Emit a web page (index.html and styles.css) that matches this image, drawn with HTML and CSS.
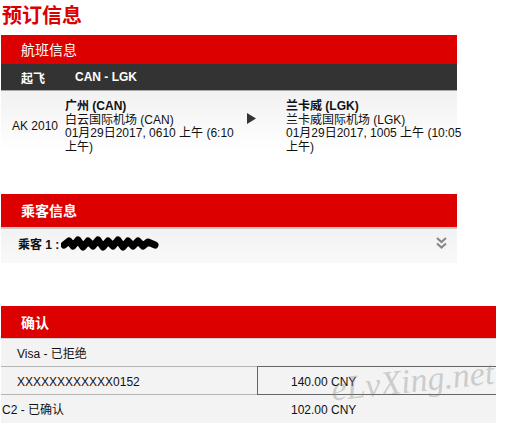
FILE: index.html
```html
<!DOCTYPE html>
<html lang="zh-CN">
<head>
    <meta charset="UTF-8">
    <title>预订信息</title>
    <link rel="stylesheet" href="styles.css">
</head>
<body>

<h1 class="page-title">预订信息</h1>

<section class="panel panel-narrow">
    <div class="panel-head thin">航班信息</div>
    <div class="leg-bar">
        <span class="leg-label">起飞</span>
        <span>CAN - LGK</span>
    </div>
    <div class="leg">
        <div class="leg-no">AK 2010</div>
        <div class="leg-point">
            <b>广州 (CAN)</b><br>
            白云国际机场 (CAN)<br>
            01月29日2017, 0610 上午 (6:10 上午)
        </div>
        <div class="leg-arrow">
            <svg width="9" height="11" viewBox="0 0 9 11"><path d="M0 0 L9 5.5 L0 11 Z" fill="#333"/></svg>
        </div>
        <div class="leg-point">
            <b>兰卡威 (LGK)</b><br>
            兰卡威国际机场 (LGK)<br>
            01月29日2017, 1005 上午 (10:05 上午)
        </div>
    </div>
</section>

<section class="panel panel-narrow">
    <div class="panel-head">乘客信息</div>
    <div class="passenger">
        <span class="passenger-label">乘客 1 :</span>
        <svg class="scribble" width="98" height="16" viewBox="0 0 98 16">
            <path d="M3 9 L8 5 L12 10 L17 4 L22 11 L27 5 L32 10 L37 4 L42 11 L47 5 L52 10 L57 4 L62 11 L67 5 L72 10 L77 5 L82 10 L87 6 L94 9" stroke="#000" stroke-width="7" fill="none" stroke-linejoin="round" stroke-linecap="round"/>
        </svg>
        <svg class="expand" width="11" height="12" viewBox="0 0 11 12">
            <path d="M1 1 L5.5 5 L10 1 M1 6.5 L5.5 10.5 L10 6.5" stroke="#888" stroke-width="2.2" fill="none"/>
        </svg>
    </div>
</section>

<section class="panel panel-wide">
    <div class="panel-head flat">确认</div>
    <div class="pay">
        <div class="pay-cell pay-full">Visa - 已拒绝</div>
        <div class="pay-cell">XXXXXXXXXXXX0152</div>
        <div class="pay-cell pay-box">140.00 CNY</div>
        <div class="pay-cell pay-flush">C2 - 已确认</div>
        <div class="pay-cell pay-amount">102.00 CNY</div>
    </div>
    <div class="watermark">eLvXing.net</div>
</section>

</body>
</html>
```

FILE: styles.css
```css
body {
    margin: 0;
    font-family: "Liberation Sans", Arial, "Noto Sans CJK SC", sans-serif;
    font-size: 12px;
    color: #111;
    background-color: #fff;
}

.page-title {
    margin: 0;
    padding: 4px 0 7px 2px;
    font-size: 20px;
    line-height: 24px;
    color: #d80000;
}

.panel {
    position: relative;
    margin-left: 1px;
}

.panel-narrow {
    width: 456px;
    margin-bottom: 43px;
}

.panel-narrow:first-of-type {
    margin-bottom: 44px;
}

.panel-wide {
    width: 495px;
}

.panel-head {
    height: 35px;
    padding: 2px 0 0 20px;
    box-sizing: border-box;
    line-height: 31px;
    font-size: 14px;
    font-weight: bold;
    color: #fff;
    background-color: #dc0000;
    border-bottom: 2px solid #c8c8c8;
}

.panel-head.thin {
    height: 29px;
    line-height: 27px;
    font-weight: normal;
    border-bottom: none;
}

.panel-head.flat {
    height: 32px;
    line-height: 30px;
    border-bottom: none;
}

.leg-bar {
    display: flex;
    height: 27px;
    box-sizing: border-box;
    align-items: center;
    padding-left: 20px;
    font-weight: bold;
    color: #fff;
    background-color: #333;
    border-bottom: 1px solid #aaa;
}

.leg-label {
    width: 54px;
}

.leg {
    display: grid;
    grid-template-columns: 53px 171px 50px 172px;
    align-items: center;
    box-sizing: border-box;
    padding: 9px 0 0 11px;
    height: 59px;
    line-height: 13.5px;
    background: linear-gradient(#f1f1f1, #fff);
}

.leg-point:last-child {
    width: 182px;
}

.leg-arrow {
    padding: 0 0 0 11px;
    margin-top: -18px;
    line-height: 0;
}

.passenger {
    display: flex;
    align-items: center;
    height: 34px;
    padding: 0 10px 5px 17px;
    box-sizing: border-box;
    background: linear-gradient(#f2f2f2, #f9f9f9);
}

.passenger-label {
    font-weight: bold;
}

.scribble {
    margin-left: 2px;
}

.expand {
    margin-left: auto;
    margin-top: -2px;
}

.pay {
    display: grid;
    grid-template-columns: 256px 1fr;
    border-top: 1px solid #d0d0d0;
}

.pay-cell {
    height: 28px;
    box-sizing: border-box;
    padding: 8px 0 0 16px;
    line-height: 14px;
    background-color: #f3f3f3;
    border-bottom: 1px solid #b4b4b4;
}

.pay-full {
    grid-column: span 2;
}

.pay-box {
    height: 29px;
    margin: -1px 0 0;
    padding-left: 33px;
    padding-top: 8px;
    border: 1px solid #666;
    border-right: none;
}

.pay-flush {
    padding-left: 1px;
    border-bottom: none;
}

.pay-amount {
    padding-left: 34px;
    border-bottom: none;
}

.watermark {
    position: absolute;
    left: 330px;
    top: 56px;
    font-family: "Liberation Serif", serif;
    font-style: italic;
    font-size: 34px;
    color: rgba(140, 140, 140, 0.4);
    transform: rotate(-6deg);
}
```
